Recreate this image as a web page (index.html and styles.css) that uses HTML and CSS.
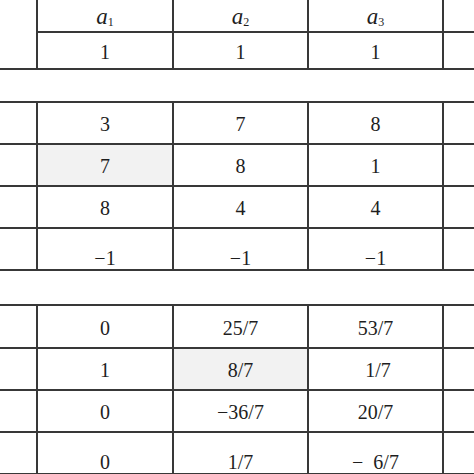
FILE: index.html
```html
<!DOCTYPE html>
<html>
<head>
<meta charset="utf-8">
<link rel="stylesheet" href="styles.css">
</head>
<body>
<table class="tableau">
  <colgroup>
    <col class="c-label">
    <col class="c-val c-first">
    <col class="c-val">
    <col class="c-val">
    <col class="c-val">
  </colgroup>
  <tr class="r-head">
    <td class="lbl"></td>
    <td><i class="var">a</i><sub class="idx">1</sub></td>
    <td><i class="var">a</i><sub class="idx">2</sub></td>
    <td><i class="var">a</i><sub class="idx">3</sub></td>
    <td></td>
  </tr>
  <tr class="r-w">
    <td class="lbl"></td><td>1</td><td>1</td><td>1</td><td></td>
  </tr>
  <tr class="r-gap1"><td class="gap" colspan="5"></td></tr>
  <tr class="r-std">
    <td class="lbl"></td><td>3</td><td>7</td><td>8</td><td></td>
  </tr>
  <tr class="r-std">
    <td class="lbl"></td><td class="pivot">7</td><td>8</td><td>1</td><td></td>
  </tr>
  <tr class="r-std">
    <td class="lbl"></td><td>8</td><td>4</td><td>4</td><td></td>
  </tr>
  <tr class="r-low">
    <td class="lbl"></td><td>&minus;1</td><td>&minus;1</td><td>&minus;1</td><td></td>
  </tr>
  <tr class="r-gap2"><td class="gap" colspan="5"></td></tr>
  <tr class="r-tall">
    <td class="lbl"></td><td>0</td><td>25/7</td><td>53/7</td><td></td>
  </tr>
  <tr class="r-std">
    <td class="lbl"></td><td>1</td><td class="pivot">8/7</td><td>&nbsp;1/7</td><td></td>
  </tr>
  <tr class="r-std">
    <td class="lbl"></td><td>0</td><td>&minus;36/7</td><td>20/7</td><td></td>
  </tr>
  <tr class="r-low">
    <td class="lbl"></td><td>0</td><td>1/7</td><td>&minus;&nbsp; 6/7</td><td></td>
  </tr>
</table>
</body>
</html>
```
FILE: styles.css
```css
html, body {
  margin: 0;
  padding: 0;
  background: #ffffff;
  overflow: hidden;
  width: 474px;
  height: 474px;
}

.tableau {
  border-collapse: collapse;
  table-layout: fixed;
  width: 579px;
  font-family: "Liberation Serif", "Times New Roman", serif;
  font-size: 20px;
  color: #1e1e1e;
  border-top: hidden;
  border-left: hidden;
}

.c-label { width: 37px; }
.c-val { width: 135px; }
.c-first { width: 136px; }

.tableau td {
  border: 2px solid #383838;
  padding: 2px 0 0 0;
  text-align: center;
  vertical-align: middle;
  line-height: 1.1;
}

.r-head td { border-top: hidden; height: 29px; }
.r-head td.lbl { border-bottom: hidden; }
.r-w td { height: 33px; }
.r-gap1 td { height: 31px; }
.r-std td { height: 38px; }
.r-gap2 td { height: 33px; }
.r-tall td { height: 39px; }

.tableau .r-low td {
  height: 40px;
  vertical-align: bottom;
  padding: 0;
}

.tableau td.gap {
  border-left: hidden;
  border-right: hidden;
  padding: 0;
}

.tableau td.pivot { background: #f2f2f2; }

.var {
  font-style: italic;
  font-size: 23px;
}

.idx {
  font-size: 12px;
  vertical-align: -2px;
}
```
